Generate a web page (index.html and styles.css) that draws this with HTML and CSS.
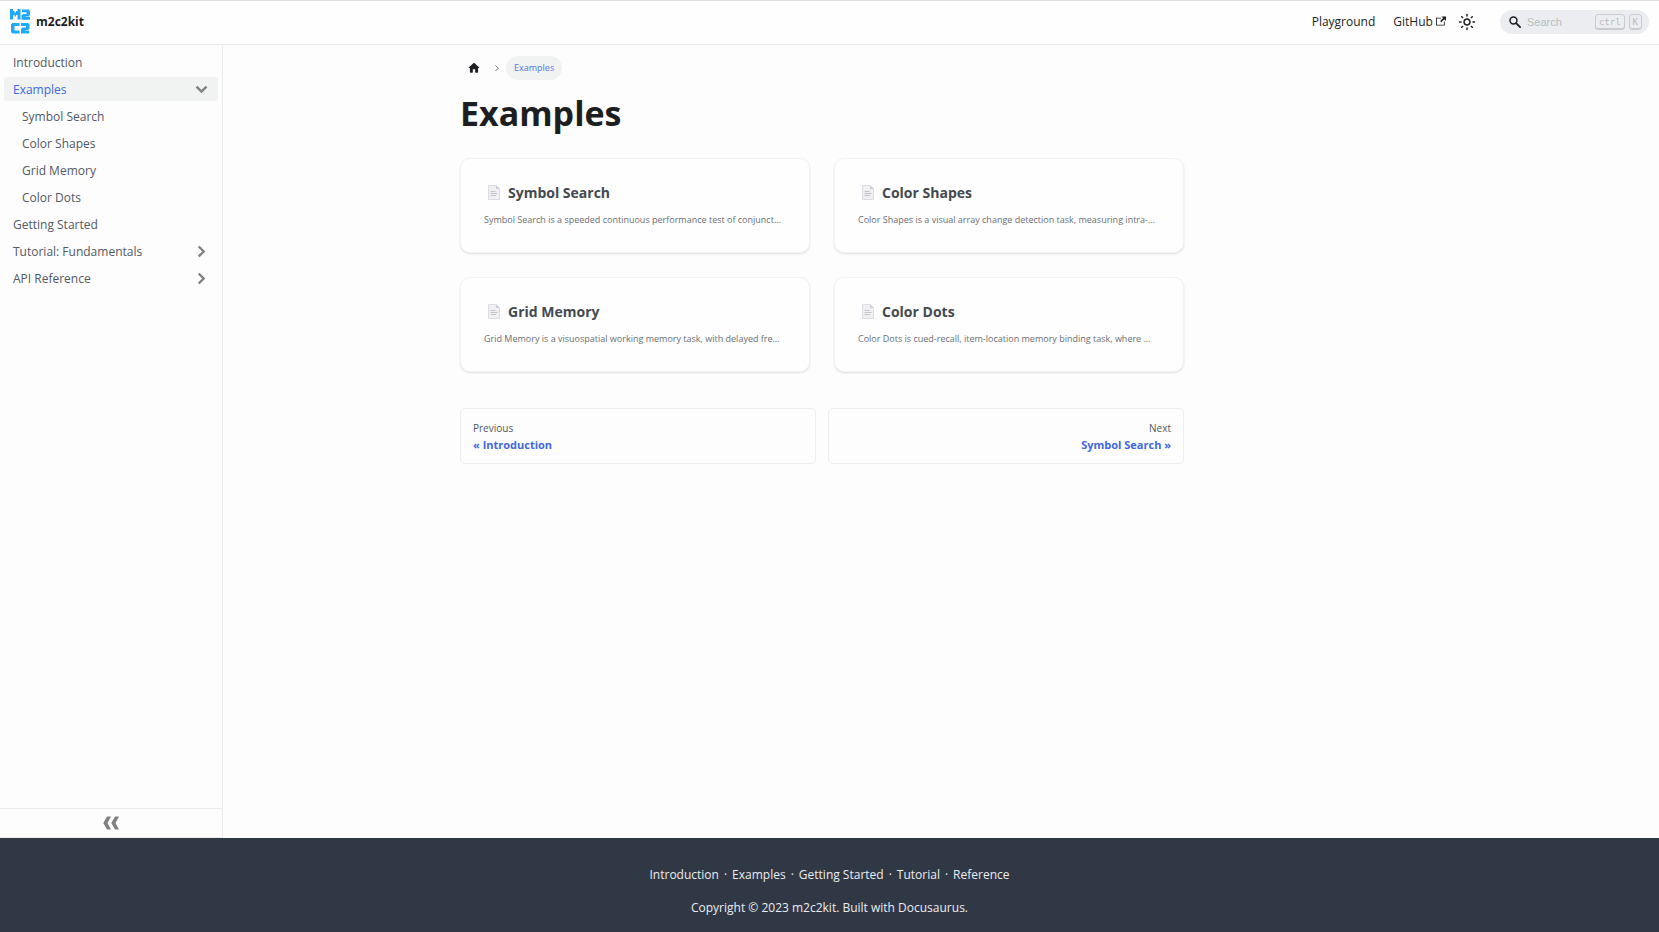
FILE: index.html
```html
<!DOCTYPE html>
<html lang="en">
<head>
<meta charset="utf-8">
<title>Examples | m2c2kit</title>
<link rel="stylesheet" href="styles.css">
</head>
<body>
<svg class="defs" aria-hidden="true">
  <symbol id="chevron" viewBox="0 0 24 24"><path d="M4 7.500 12 15.500 20 7.500" fill="none" stroke="currentColor" stroke-width="3.800"/></symbol>
  <symbol id="doc" viewBox="0 0 12 15"><path d="M.5 .5h7.700L11.500 3.800V14.500H.5z" fill="#efeff4" stroke="#dcdce4"/><path d="M8 .5V4h3.700z" fill="#cdcdd9"/><path d="M2.500 6.500h5M2.500 8.500h7M2.500 10.500h5.500" stroke="#bdbdc6" stroke-width=".9"/></symbol>
</svg>
<header class="navbar">
  <a class="brand" href="#">
    <svg class="logo" viewBox="0 0 20 25" aria-hidden="true"><g fill="#1fa9fb">
      <path d="M0 0h3v2h1.500v1.500h1.500V2h1.500V0h3v10.500h-3V6H6v1.500H4.500V6H3v4.500H0z"/>
      <path d="M12 .5h7v1h1v5h-1v1h-3.500V8H20v2.800h-8.500V6h1V5h4V3.300H12z"/>
      <path d="M2 14h7.500v3H4.500v4.500h5v3H2v-1H1V15h1z"/>
      <path d="M11 14h7.500v1h1v5h-1v1H15v.5h4.200v3H11v-5h1v-1h4V17h-5z"/>
    </g></svg>
    <span>m2c2kit</span>
  </a>
  <nav class="nav-links">
    <a href="#">Playground</a>
    <a href="#">GitHub <svg class="external" viewBox="0 0 24 24" aria-hidden="true"><path fill="currentColor" d="M21 13v10h-21v-19h12v2h-10v15h17v-8h2zm3-12h-10.988l4.035 4-6.977 7.070 2.828 2.828 6.977-7.070 4.125 4.172v-11z"/></svg></a>
    <button class="theme" aria-label="Switch theme"><svg viewBox="0 0 24 24"><path fill="currentColor" d="M12,9c1.650,0,3,1.350,3,3s-1.350,3-3,3s-3-1.350-3-3S10.350,9,12,9 M12,7c-2.760,0-5,2.240-5,5s2.240,5,5,5s5-2.240,5-5 S14.760,7,12,7L12,7z M2,13l2,0c0.550,0,1-0.450,1-1s-0.450-1-1-1l-2,0c-0.550,0-1,0.450-1,1S1.450,13,2,13z M20,13l2,0c0.550,0,1-0.450,1-1 s-0.450-1-1-1l-2,0c-0.550,0-1,0.450-1,1S19.450,13,20,13z M11,2v2c0,0.550,0.450,1,1,1s1-0.450,1-1V2c0-0.550-0.450-1-1-1S11,1.450,11,2z M11,20v2c0,0.550,0.450,1,1,1s1-0.450,1-1v-2c0-0.550-0.450-1-1-1S11,19.450,11,20z"/><path d="M4.900 4.900 6.100 6.100M17.900 17.900l1.200 1.200M4.900 19.100l1.200-1.200M17.900 6.100l1.200-1.200" stroke="currentColor" stroke-width="2" stroke-linecap="round"/></svg></button>
    <label class="search">
      <svg viewBox="0 0 20 20" aria-hidden="true"><circle cx="7.500" cy="7.500" r="5.800" fill="none" stroke="currentColor" stroke-width="2.500"/><path d="M11.800 11.800 18.500 18.500" stroke="currentColor" stroke-width="3" stroke-linecap="round"/></svg>
      <input type="search" placeholder="Search" aria-label="Search">
      <kbd>ctrl</kbd><kbd>K</kbd>
    </label>
  </nav>
</header>
<div class="layout">
  <aside class="sidebar">
    <nav class="menu">
      <a href="#">Introduction</a>
      <a href="#" class="active">Examples<svg><use href="#chevron"/></svg></a>
      <a href="#" class="sub">Symbol Search</a>
      <a href="#" class="sub">Color Shapes</a>
      <a href="#" class="sub">Grid Memory</a>
      <a href="#" class="sub">Color Dots</a>
      <a href="#">Getting Started</a>
      <a href="#" class="closed">Tutorial: Fundamentals<svg><use href="#chevron"/></svg></a>
      <a href="#" class="closed">API Reference<svg><use href="#chevron"/></svg></a>
    </nav>
    <button class="collapse" aria-label="Collapse sidebar"><svg viewBox="0 0 16 14"><path d="M4 .5h4L4.500 7 8 13.500H4L.3 7zM12 .5h4L12.500 7l3.500 6.500h-4L8.300 7z" fill="currentColor"/></svg></button>
  </aside>
  <main class="main">
    <div class="container">
      <article class="content">
        <nav class="crumbs" aria-label="Breadcrumbs">
          <a href="#" class="home" aria-label="Home"><svg viewBox="0 0 24 24"><path d="M10 19v-5h4v5c0 .55.450 1 1 1h3c.55 0 1-.450 1-1v-7h1.700c.46 0 .68-.570.330-.870L12.670 3.600c-.380-.340-.960-.340-1.340 0l-8.360 7.530c-.340.300-.130.870.330.870H5v7c0 .55.450 1 1 1h3c.55 0 1-.450 1-1z" fill="currentColor"/></svg></a>
          <svg class="sep" viewBox="0 0 6 8" aria-hidden="true"><path d="M1.500 1.500 4.300 4.200 1.500 7" fill="none" stroke="currentColor"/></svg>
          <span class="crumb">Examples</span>
        </nav>
        <h1>Examples</h1>
        <section class="cards">
          <a href="#" class="card"><h2><svg><use href="#doc"/></svg>Symbol Search</h2><p>Symbol Search is a speeded continuous performance test of conjunct…</p></a>
          <a href="#" class="card"><h2><svg><use href="#doc"/></svg>Color Shapes</h2><p>Color Shapes is a visual array change detection task, measuring intra-…</p></a>
          <a href="#" class="card"><h2><svg><use href="#doc"/></svg>Grid Memory</h2><p>Grid Memory is a visuospatial working memory task, with delayed fre…</p></a>
          <a href="#" class="card"><h2><svg><use href="#doc"/></svg>Color Dots</h2><p>Color Dots is cued-recall, item-location memory binding task, where …</p></a>
        </section>
        <nav class="pager" aria-label="Docs pages">
          <a href="#"><span>Previous</span><b>« Introduction</b></a>
          <a href="#" class="next"><span>Next</span><b>Symbol Search »</b></a>
        </nav>
      </article>
    </div>
  </main>
</div>
<footer class="footer">
  <nav><a href="#">Introduction</a><i>·</i><a href="#">Examples</a><i>·</i><a href="#">Getting Started</a><i>·</i><a href="#">Tutorial</a><i>·</i><a href="#">Reference</a></nav>
  <p>Copyright © 2023 m2c2kit. Built with Docusaurus.</p>
</footer>
</body>
</html>
```
FILE: styles.css
```css
* { box-sizing: border-box; }
body {
  margin: 0;
  min-height: 100vh;
  display: flex;
  flex-direction: column;
  background: #fdfdfd;
  color: #1c1e21;
  font: 12px/18px "Segoe UI", "Open Sans", "Noto Sans", sans-serif;
}
a { color: inherit; text-decoration: none; }
h1, h2, p { margin: 0; }
button { border: 0; padding: 0; background: none; color: inherit; }
.defs { display: none; }

.navbar {
  display: flex;
  justify-content: space-between;
  align-items: center;
  height: 44px;
  padding: 0 10px 2px;
  border-top: 1px solid #dcdcdc;
  background: #fefefe;
  box-shadow: 0 1px 1px #ebebeb;
}
.brand { display: flex; align-items: center; gap: 6px; font-weight: 700; }
.logo { width: 20px; height: 25px; }
.nav-links { display: flex; align-items: center; font-weight: 500; }
.nav-links > a { margin-right: 18px; }
.external { width: 10px; height: 10px; }
.nav-links > a + a { margin-right: 12px; }
.theme { display: flex; width: 18px; height: 18px; }
.theme svg { width: 18px; height: 18px; }
.search {
  display: flex;
  align-items: center;
  width: 149px;
  height: 24px;
  margin-left: 24px;
  padding: 0 7px 0 9px;
  border-radius: 12px;
  background: #ebedf0;
}
.search svg { flex: none; width: 12px; height: 12px; }
.search input {
  flex: 1;
  min-width: 0;
  border: 0;
  padding: 0 0 0 6px;
  outline: 0;
  background: none;
  font: 11px "Liberation Sans", sans-serif;
}
.search input::placeholder { color: #b9bcc1; }
kbd {
  height: 16px;
  margin-left: 4px;
  padding: 0 3px;
  border: 1px solid #c9cbd0;
  border-radius: 3px;
  box-shadow: inset 0 -1px 0 #c9cbd0;
  color: #b9bcc1;
  font: 9px/15px "DejaVu Sans Mono", monospace;
}

.layout { flex: 1; display: flex; }
.sidebar {
  flex: none;
  display: flex;
  flex-direction: column;
  width: 223px;
  border-right: 1px solid #ebebeb;
}
.menu {
  flex: 1;
  display: flex;
  flex-direction: column;
  gap: 3px;
  padding: 6px 4px;
  color: #525963;
  font-weight: 500;
}
.menu a {
  display: flex;
  justify-content: space-between;
  align-items: center;
  height: 24px;
  padding: 1px 9px 0;
  border-radius: 3px;
}
.menu .sub { margin-left: 9px; }
.menu .active { background: #f1f2f2; color: #4169e1; }
.menu svg { width: 15px; height: 15px; color: #7f8082; }
.menu .closed svg { transform: rotate(-90deg); }
.collapse {
  display: flex;
  justify-content: center;
  align-items: center;
  height: 30px;
  border: solid #ebebeb;
  border-width: 1px 0;
  color: #808184;
}
.collapse svg { width: 16px; height: 14px; }

.main { flex: 1; min-width: 0; }
.container { max-width: 962px; margin: 0 auto; padding-top: 12px; }
.content { max-width: 724px; }
.crumbs { display: flex; align-items: center; height: 24px; font-size: 9px; }
.home { display: flex; padding: 0 8px 0 7px; }
.home svg { width: 14px; height: 14px; }
.sep { width: 6px; height: 8px; margin: 0 6px 0 5px; color: #77787b; }
.crumb { padding: 3px 8px; border-radius: 12px; background: #f1f2f2; color: #5578e3; }
h1 { margin: 11px 0 22px; font-size: 34px; line-height: 45px; }
.cards { display: grid; grid-template-columns: 1fr 1fr; gap: 24px; }
.card {
  min-width: 0;
  padding: 24px 23px;
  border: 1px solid #f3f3f4;
  border-radius: 10px;
  background: #fefefe;
  box-shadow: 0 1px 2px #dededf;
  color: #444950;
}
h2 { display: flex; align-items: center; gap: 8px; padding-left: 4px; font-size: 14px; line-height: 19px; }
h2 svg { width: 12px; height: 15px; }
.card p {
  margin-top: 10px;
  overflow: hidden;
  color: #6c6f74;
  font-size: 9px;
  line-height: 16px;
  white-space: nowrap;
}
.pager { display: grid; grid-template-columns: 1fr 1fr; gap: 12px; margin-top: 36px; }
.pager a {
  display: flex;
  flex-direction: column;
  gap: 1px;
  padding: 12px 12px 9px;
  border: 1px solid #ebedf0;
  border-radius: 5px;
}
.pager span { color: #525860; font-size: 10px; line-height: 14px; }
.pager b { color: #4169e1; font-size: 11px; line-height: 18px; }
.pager .next { text-align: right; }

.footer { padding: 28px 24px 15px; background: #303846; color: #ebedf0; text-align: center; }
.footer nav { display: flex; flex-wrap: wrap; justify-content: center; gap: 5px; }
.footer i { font-style: normal; }
.footer p { margin-top: 15px; }
```
